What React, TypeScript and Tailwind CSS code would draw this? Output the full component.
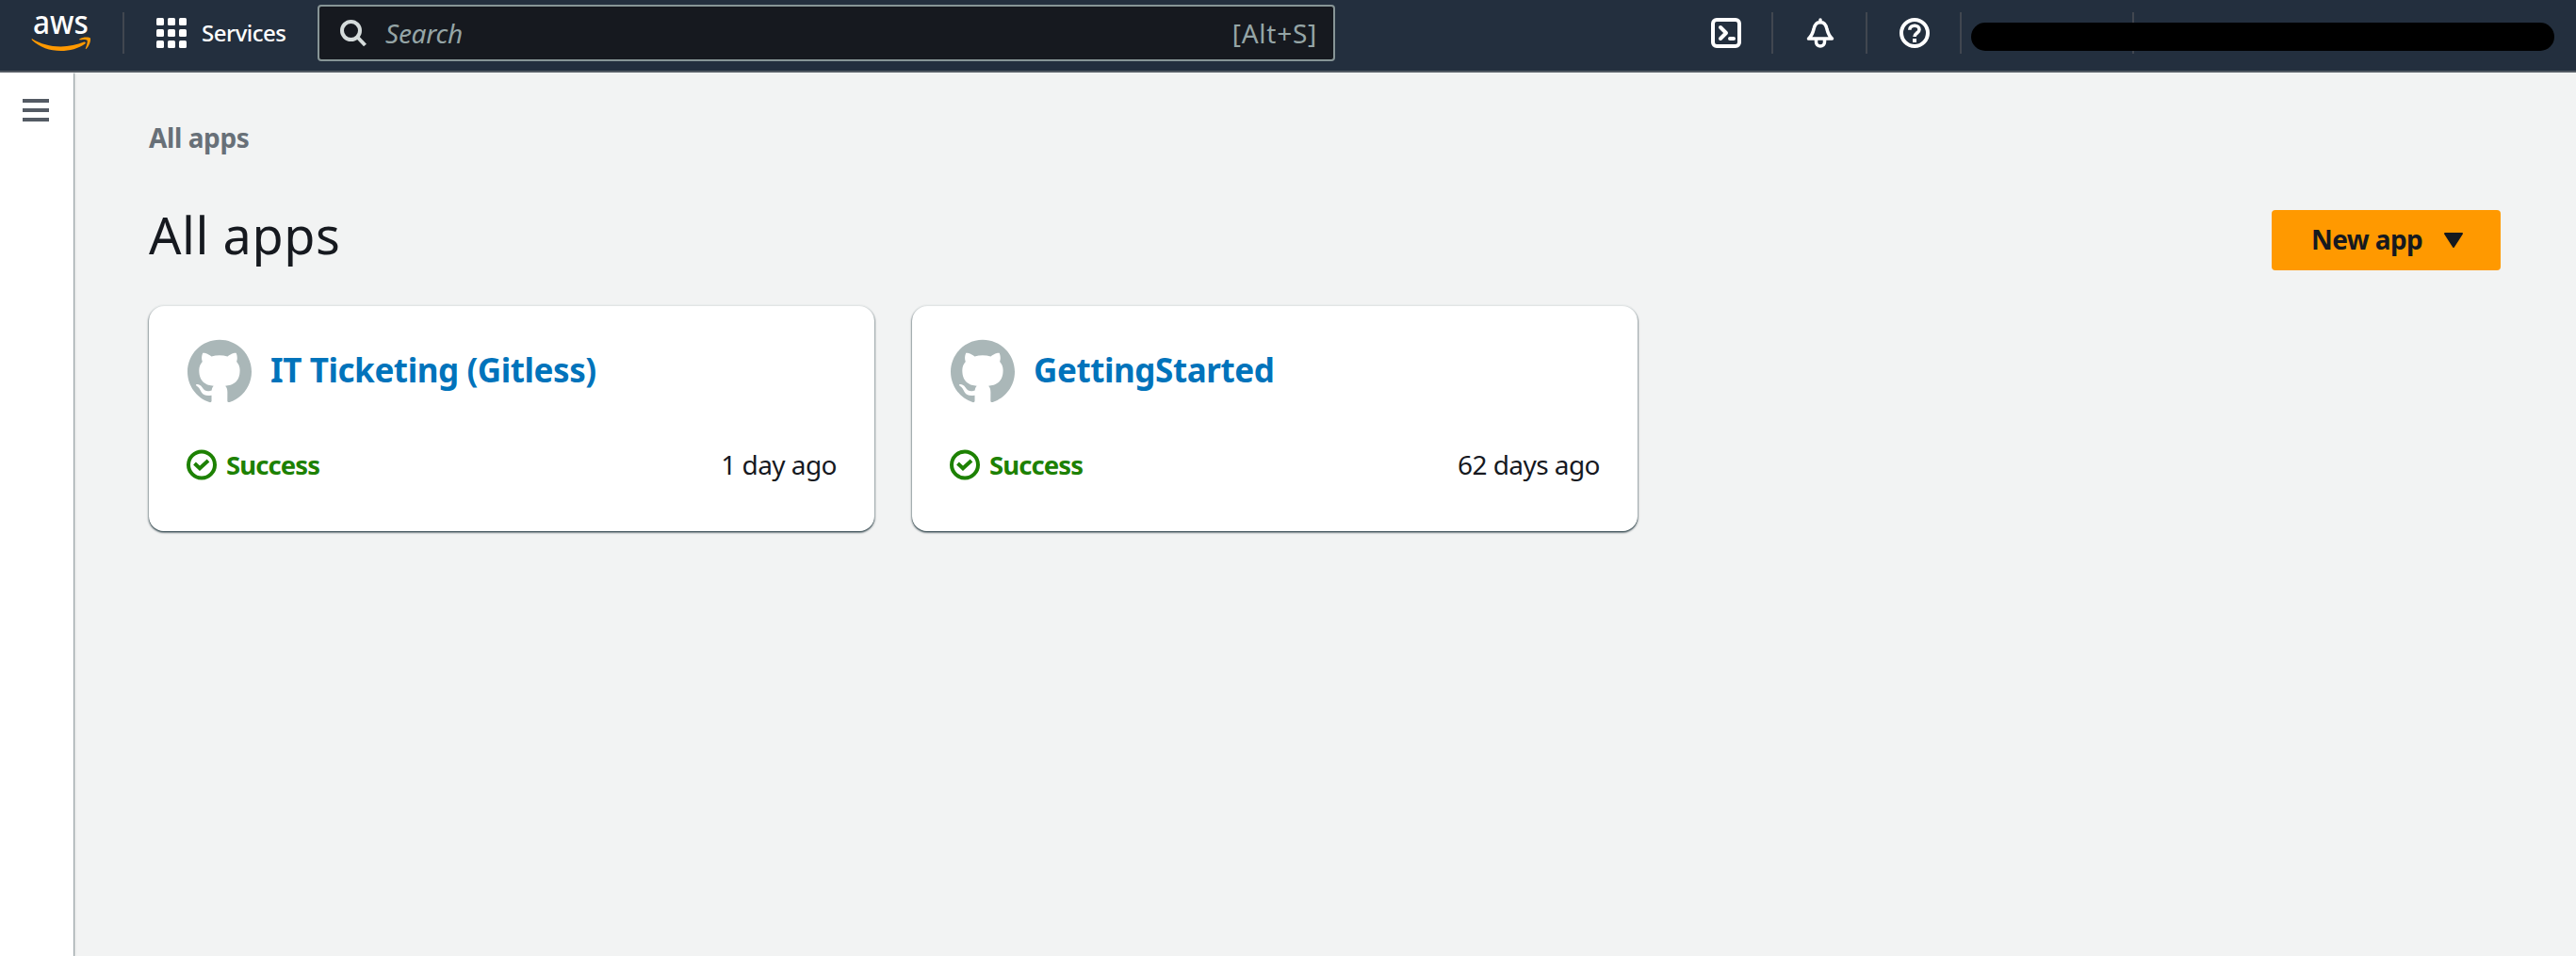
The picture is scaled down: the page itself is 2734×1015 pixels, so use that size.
import type { ReactNode } from "react";
import { SiGithub } from "react-icons/si";

function Divider({ className = "" }: { className?: string }) {
  return <span className={`mt-[13px] h-11 w-0.5 shrink-0 bg-[#414750] ${className}`} />;
}

function AwsLogo() {
  return (
    <div className="ml-[33px] w-[64px]">
      <span className="block h-[39px] origin-left translate-x-[2px] scale-x-[0.9] text-[35px] leading-[45px] font-medium">aws</span>
      <svg className="block" width="64" height="15" viewBox="0 0 64 15" fill="#ff9900">
        <path d="M1.200 2.200C10 7.600 20 10.400 31.500 10.400 40 10.400 49 8.600 56.200 5.600c1.300-.5 2.300.8 1.100 1.800C50.500 12.400 40.800 15 31.500 15 20 15 9 11.200.9 3.500.3 2.700.7 1.900 1.200 2.200Z" />
        <path d="M59.500 3.800C58.300 2.400 54 3 51.800 3.300c-.8.1-.9-.6-.2-1C55.300-.2 62 .3 62.800 1.500c.8 1-.2 7.900-4.100 11.200-.6.500-1.200.2-.9-.4.8-2.200 2.600-7.100 1.700-8.500Z" />
      </svg>
    </div>
  );
}

function GridIcon() {
  return (
    <div className="grid size-8 grid-cols-3 gap-1">
      {Array.from({ length: 9 }, (_, i) => (
        <span key={i} className="rounded-[1.5px] bg-white" />
      ))}
    </div>
  );
}

function IconButton({ label, children }: { label: string; children: ReactNode }) {
  return (
    <button aria-label={label} className="flex h-[70px] w-[98px] items-center justify-center pl-0.5">
      <svg width="32" height="32" viewBox="0 0 32 32" fill="none" stroke="#fff" strokeWidth="4">
        {children}
      </svg>
    </button>
  );
}

interface AppInfo {
  name: string;
  updated: string;
}

function AppCard({ name, updated }: AppInfo) {
  return (
    <article className="flex h-[239px] w-[770px] flex-col rounded-2xl bg-white pr-10 pl-10 shadow-[0_2px_2px_0_rgba(0,28,36,0.3),1px_1px_2px_0_rgba(0,28,36,0.3),-1px_1px_2px_0_rgba(0,28,36,0.3),0_1px_0_0_#879596,0_-1px_0_1px_#eaeded]">
      <div className="mt-9 flex h-[67px] items-center gap-[20px] pl-px">
        <SiGithub className="mb-[2px] size-[68px] shrink-0 text-[#aab7b8]" />
        <a className="mb-[2px] text-[35px] font-bold tracking-[-0.42px] text-[#0073bb]">{name}</a>
      </div>
      <div className="mt-[49px] flex h-[33px] items-center">
        <svg width="32" height="33" viewBox="0 0 32 33" fill="none" stroke="#1d8102" strokeWidth="4">
          <circle cx="16" cy="16.500" r="14" />
          <path d="M8.500 15l5.500 5.200L23 12" />
        </svg>
        <span className="ml-[10px] text-[27.5px] font-bold tracking-[-0.9px] text-[#1d8102]">Success</span>
        <span className="mb-px ml-auto text-[28px] tracking-[-0.55px]">{updated}</span>
      </div>
    </article>
  );
}

const apps: AppInfo[] = [
  { name: "IT Ticketing (Gitless)", updated: "1 day ago" },
  { name: "GettingStarted", updated: "62 days ago" },
];

export default function App() {
  return (
    <div className="flex h-[1015px] w-full flex-col overflow-hidden bg-[#f2f3f3] font-['Noto_Sans',sans-serif] text-[#16191f]">
      <header className="flex h-[77px] shrink-0 border-b-2 border-[#545b64] bg-[#232f3e] text-white">
        <AwsLogo />
        <Divider className="ml-[33px]" />
        <button className="mt-[19px] ml-[34px] flex h-8 w-[138px] items-center gap-4">
          <GridIcon />
          <span className="mb-px text-2xl font-medium tracking-[-0.5px]">Services</span>
        </button>
        <div className="mt-[5px] ml-[33px] flex h-[60px] w-[1080px] items-center rounded-[4px] border-2 border-[#879596] bg-[#16191f] pr-[17px] pl-[21px] text-[28px] text-[#95a5a6]">
          <svg width="30" height="30" viewBox="0 0 30 30" fill="none" stroke="#d5dbdb" strokeWidth="4">
            <circle cx="12.500" cy="12.500" r="9.500" />
            <path d="M19 19l8.500 9" />
          </svg>
          <span className="mb-px ml-[19px] tracking-[-0.25px] italic">Search</span>
          <span className="mb-px ml-auto tracking-[0.75px]">[Alt+S]</span>
        </div>
        <div className="ml-auto flex">
          <IconButton label="CloudShell">
            <rect x="2" y="2" width="28" height="28" rx="4" />
            <path d="M10 10l6 6-6 6M20 22h4" strokeLinecap="round" strokeLinejoin="round" />
          </IconButton>
          <Divider />
          <IconButton label="Notifications">
            <path d="M16 2v3M3.500 22h25C25 19 24 16 23 12 22 7 20 4.500 16 4.500S10 7 9 12C8 16 7 19 3.500 22Z" strokeWidth="3.500" strokeLinecap="round" strokeLinejoin="round" />
            <path d="M11.500 23v2.500a4.500 4.500 0 0 0 9 0V23" strokeWidth="3.500" />
          </IconButton>
          <Divider />
          <IconButton label="Help">
            <circle cx="16" cy="16" r="14" />
            <path d="M10.800 12.800C10.800 9.800 13 8.200 16 8.200s5 1.800 5 4.200c0 3.600-5 3.600-5 7.600" strokeWidth="3.600" />
            <path d="M16 22v4" />
          </IconButton>
          <Divider />
          <div className="relative w-[652px]">
            <div className="ml-[181px] flex">
              <Divider />
            </div>
            <div className="absolute top-6 left-[10px] h-[30px] w-[619px] rounded-full bg-black" />
          </div>
        </div>
      </header>
      <div className="flex flex-1">
        <nav className="w-[78px] shrink-0 bg-white shadow-[1px_1px_1px_0_rgba(0,28,36,0.3),1px_1px_3px_0_rgba(0,28,36,0.15)]">
          <button aria-label="Open navigation" className="mt-7 ml-6 flex flex-col gap-1.5">
            <span className="h-1 w-7 bg-[#545b64]" />
            <span className="h-1 w-7 bg-[#545b64]" />
            <span className="h-1 w-7 bg-[#545b64]" />
          </button>
        </nav>
        <main className="flex-1 pt-[53px] pr-20 pl-20">
          <div className="h-8 text-[28px] leading-8 font-bold tracking-[-0.4px] text-[#687078]">All apps</div>
          <div className="mt-[55px] flex h-[70px] items-start justify-between">
            <h1 className="text-[54px] leading-[64px] tracking-[0.55px]">All apps</h1>
            <button className="mt-1.5 flex h-16 w-[243px] items-center rounded-[4px] bg-[#ff9900] pl-[42px]">
              <span className="mb-[2px] text-[28px] font-bold tracking-[-0.6px]">New app</span>
              <svg className="ml-[23px]" width="20" height="16" viewBox="0 0 20 16" fill="#16191f" stroke="#16191f" strokeWidth="2" strokeLinejoin="round">
                <path d="M1 1h18l-9 14Z" />
              </svg>
            </button>
          </div>
          <div className="mt-[38px] flex gap-10">
            {apps.map((app) => (
              <AppCard key={app.name} {...app} />
            ))}
          </div>
        </main>
      </div>
    </div>
  );
}
